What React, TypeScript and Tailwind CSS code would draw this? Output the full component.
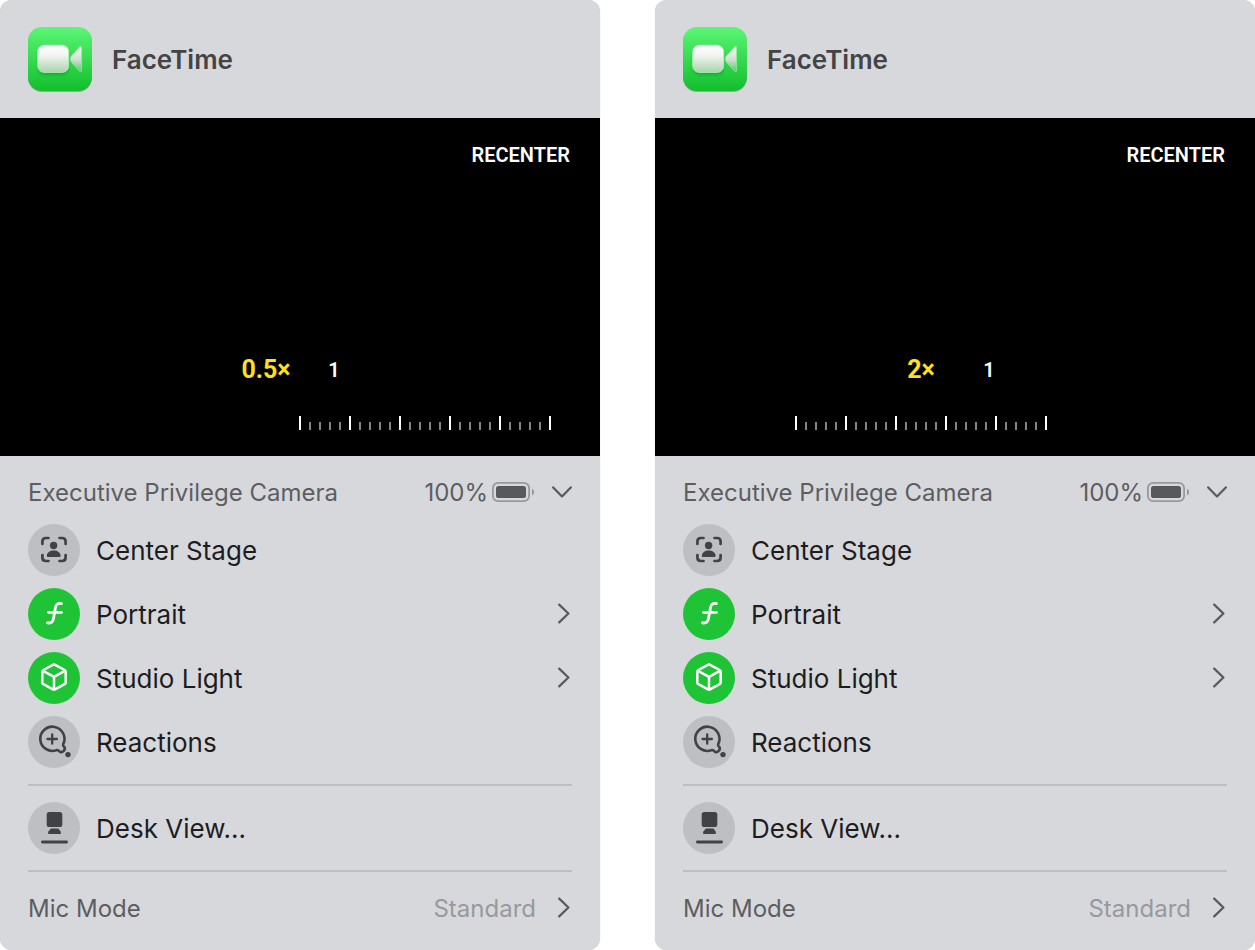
import React, { useId } from 'react'

function FaceTimeIcon() {
  const id = useId()
  return (
    <svg width="64" height="66" viewBox="0 0 64 66" aria-hidden="true">
      <defs>
        <linearGradient id={id + 'bg'} x1="0" y1="0" x2="0" y2="1">
          <stop offset="0" stopColor="#5bf675" />
          <stop offset="1" stopColor="#12be2c" />
        </linearGradient>
        <linearGradient id={id + 'cam'} x1="0" y1="0" x2="0" y2="1">
          <stop offset="0" stopColor="#ffffff" />
          <stop offset="0.35" stopColor="#f3f5f3" />
          <stop offset="1" stopColor="#a9d4ad" />
        </linearGradient>
        <linearGradient id={id + 'lens'} x1="0" y1="0" x2="0" y2="1">
          <stop offset="0" stopColor="#f4fbf4" />
          <stop offset="0.5" stopColor="#d3e2d4" />
          <stop offset="1" stopColor="#5fc46c" />
        </linearGradient>
        <filter id={id + 'blur'} x="-20%" y="-20%" width="140%" height="150%">
          <feGaussianBlur stdDeviation="1.6" />
        </filter>
      </defs>
      <rect x="0" y="1" width="64" height="64" rx="14" fill="#000" opacity="0.25" />
      <rect width="64" height="64" rx="14" fill={`url(#${id}bg)`} />
      <rect x="10" y="21" width="31" height="27" rx="7" fill="#0c8a20" opacity="0.5" filter={`url(#${id}blur)`} />
      <rect x="9.7" y="18.2" width="31" height="27.2" rx="6.5" fill={`url(#${id}cam)`} stroke="#b4f5bd" strokeWidth="0.8" />
      <path
        d="M43 29.5 L51 20.5 Q53.6 18 53.6 21 V43 Q53.6 46 51 43.5 L43 34.5 Q41.5 32 43 29.5Z"
        fill={`url(#${id}lens)`}
        stroke="#8cec98"
        strokeWidth="0.8"
      />
    </svg>
  )
}

function CenterStageIcon() {
  return (
    <svg width="52" height="52" viewBox="0 0 52 52" fill="none" aria-hidden="true">
      <path
        d="M14.4 20 V17.5 Q14.4 14 18 14 H20.5 M31.5 14 H34 Q37.6 14 37.6 17.5 V20 M37.6 31 V33.5 Q37.6 37 34 37 H31.5 M20.5 37 H18 Q14.4 37 14.4 33.5 V31"
        stroke="#414246"
        strokeWidth="2.7"
        strokeLinecap="round"
      />
      <circle cx="25.6" cy="21.5" r="3.7" fill="#414246" />
      <path d="M18.8 32 C18.8 28.6 22 26.6 25.7 26.6 S32.6 28.6 32.6 32 Q32.6 33 31.6 33 H19.8 Q18.8 33 18.8 32Z" fill="#414246" />
    </svg>
  )
}

function PortraitIcon() {
  return (
    <svg width="52" height="52" viewBox="0 0 52 52" fill="none" stroke="#fff" strokeWidth="2.8" strokeLinecap="round" aria-hidden="true">
      <path d="M33.4 15.6 C29.4 14.9 28 16.5 27.4 20 L25.5 30.5 C24.9 34 23.4 35.5 19.5 34.9" />
      <path d="M20.6 24.4 H33.4" />
    </svg>
  )
}

function StudioLightIcon() {
  return (
    <svg width="52" height="52" viewBox="0 0 52 52" fill="none" stroke="#fff" strokeWidth="2.5" strokeLinejoin="round" strokeLinecap="round" aria-hidden="true">
      <path d="M24.9 12.9 Q26 12.3 27.1 12.9 L36.6 18 Q37.7 18.6 37.7 19.8 V30.4 Q37.7 31.6 36.6 32.2 L27.1 37.3 Q26 37.9 24.9 37.3 L15.4 32.2 Q14.3 31.6 14.3 30.4 V19.8 Q14.3 18.6 15.4 18Z" />
      <path d="M15 18.8 L26 24.8 L37 18.8 M26 24.8 V37" />
    </svg>
  )
}

function ReactionsIcon() {
  return (
    <svg width="52" height="52" viewBox="0 0 52 52" fill="none" stroke="#414246" strokeLinecap="round" strokeLinejoin="round" aria-hidden="true">
      <path
        strokeWidth="2.6"
        d="M35.2 28.2 A12.1 12.1 0 1 0 28.4 34.2 C30.2 33.5 30.6 35 31.8 35.7 A3.5 3.5 0 0 0 36.4 31 C35.5 30.2 34.6 29.8 35.2 28.2Z"
      />
      <path strokeWidth="2.3" d="M24.2 18.3 V27.7 M19.5 23 H28.9" />
      <circle cx="40" cy="38.6" r="2.7" fill="#414246" stroke="none" />
    </svg>
  )
}

function DeskViewIcon() {
  return (
    <svg width="52" height="52" viewBox="0 0 52 52" fill="#414246" aria-hidden="true">
      <rect x="18.7" y="10" width="15.6" height="15" rx="2.6" />
      <path d="M22.8 26.6 H30.4 C31 28 33 28.8 33 31 Q33 32 32 32 H21 Q20 32 20 31 C20 28.8 22.2 28 22.8 26.6Z" />
      <rect x="13" y="38.6" width="27" height="2.8" rx="1.4" />
    </svg>
  )
}

function BatteryIcon() {
  return (
    <svg width="42" height="20" viewBox="0 0 42 20" fill="none" aria-hidden="true">
      <rect x="0.9" y="0.9" width="36.2" height="18.2" rx="5.2" stroke="#98999d" strokeWidth="1.8" />
      <rect x="4" y="4" width="30" height="12" rx="2.6" fill="#58595d" />
      <path d="M40 6.4 Q42.2 8 42.2 10 T40 13.6Z" fill="#98999d" />
    </svg>
  )
}

function ChevronRight() {
  return (
    <svg className="mr-0.5" width="12" height="22" viewBox="0 0 12 22" fill="none" stroke="#58595d" strokeWidth="2.2" strokeLinecap="round" strokeLinejoin="round" aria-hidden="true">
      <path d="M1.2 1.6 L10.4 10.5 L1.2 19.4" />
    </svg>
  )
}

function ChevronDown() {
  return (
    <svg width="20" height="12" viewBox="0 0 20 12" fill="none" stroke="#58595d" strokeWidth="2.2" strokeLinecap="round" strokeLinejoin="round" aria-hidden="true">
      <path d="M1.2 1.4 L10 10.4 L18.8 1.4" />
    </svg>
  )
}

function Ruler() {
  const ticks = Array.from({ length: 26 }, (_, i) => i)
  return (
    <svg className="block" width="252" height="14" viewBox="0 0 252 14" aria-hidden="true">
      {ticks.map((i) =>
        i % 5 === 0 ? (
          <rect key={i} x={i * 10} y="0" width="2" height="14" fill="#fff" />
        ) : (
          <rect key={i} x={i * 10} y="6" width="2" height="8" fill="#848484" />
        )
      )}
    </svg>
  )
}

const effects = [
  { label: 'Center Stage', icon: <CenterStageIcon />, on: false, more: false },
  { label: 'Portrait', icon: <PortraitIcon />, on: true, more: true },
  { label: 'Studio Light', icon: <StudioLightIcon />, on: true, more: true },
  { label: 'Reactions', icon: <ReactionsIcon />, on: false, more: false },
]

type RowProps = {
  label: string
  icon: React.ReactNode
  on?: boolean
  more?: boolean
}

function EffectRow({ label, icon, on, more }: RowProps) {
  return (
    <button type="button" className="flex w-full items-center gap-4 text-left">
      <span className={`h-[52px] w-[52px] shrink-0 rounded-full ${on ? 'bg-[#1fc436]' : 'bg-[#bebfc3]'}`}>{icon}</span>
      <span className="grow pt-0.5 text-[26px] leading-8 text-[#1d1d1f]">{label}</span>
      {more && <ChevronRight />}
    </button>
  )
}

type PanelProps = {
  zoom: string
  value: number
  rulerClass: string
}

function VideoPanel({ zoom, value, rulerClass }: PanelProps) {
  return (
    <section className="overflow-hidden rounded-xl bg-[#d7d8dc] shadow-[0_0_1px_rgba(0,0,0,0.25)]">
      <header className="flex h-[118px] items-center gap-5 px-7 pt-0.5">
        <FaceTimeIcon />
        <h1 className="text-[26px] font-semibold leading-8 text-[#444446]">FaceTime</h1>
      </header>

      <div className="flex h-[338px] flex-col bg-black pb-[26px] pt-[25px] font-['Roboto',sans-serif] text-white">
        <button type="button" className="mr-[30px] self-end text-xl font-semibold leading-6">
          RECENTER
        </button>
        <div className="mb-[34px] mt-auto flex justify-center leading-6">
          <button type="button" className="w-[68px] text-[25px] font-bold leading-6 text-[#ffe01b]">
            {zoom}
          </button>
          <button type="button" className="w-[68px] text-xl font-semibold leading-6">
            1
          </button>
        </div>
        <div className={`relative w-[252px] ${rulerClass}`}>
          <Ruler />
          <input
            type="range"
            aria-label="Zoom"
            min={0.5}
            max={3}
            step={0.1}
            defaultValue={value}
            className="absolute inset-0 w-full opacity-0"
          />
        </div>
      </div>

      <div className="px-7 pb-[26px] pt-5 text-2xl leading-8 text-[#5d5e62]">
        <div className="flex h-8 items-center">
          <h2 className="grow pt-0.5">Executive Privilege Camera</h2>
          <span className="mr-1 pt-0.5">100%</span>
          <BatteryIcon />
          <button type="button" aria-label="Collapse" className="ml-[18px]">
            <ChevronDown />
          </button>
        </div>

        <div className="mt-4 flex flex-col gap-3">
          {effects.map((effect) => (
            <EffectRow key={effect.label} {...effect} />
          ))}
        </div>

        <hr className="my-4 border-t-2 border-[#bdbec2]" />
        <EffectRow label="Desk View..." icon={<DeskViewIcon />} />
        <hr className="mb-5 mt-4 border-t-2 border-[#bdbec2]" />

        <button type="button" className="flex h-8 w-full items-center text-left">
          <span className="grow pt-0.5">Mic Mode</span>
          <span className="mr-[22px] pt-0.5 text-[#98999d]">Standard</span>
          <ChevronRight />
        </button>
      </div>
    </section>
  )
}

export default function App() {
  return (
    <main className="grid grid-cols-2 gap-[55px] bg-white font-['Inter',sans-serif]">
      <VideoPanel zoom="0.5×" value={0.5} rulerClass="ml-[calc(50%-1px)]" />
      <VideoPanel zoom="2×" value={2} rulerClass="ml-[calc(50%-160px)]" />
    </main>
  )
}
